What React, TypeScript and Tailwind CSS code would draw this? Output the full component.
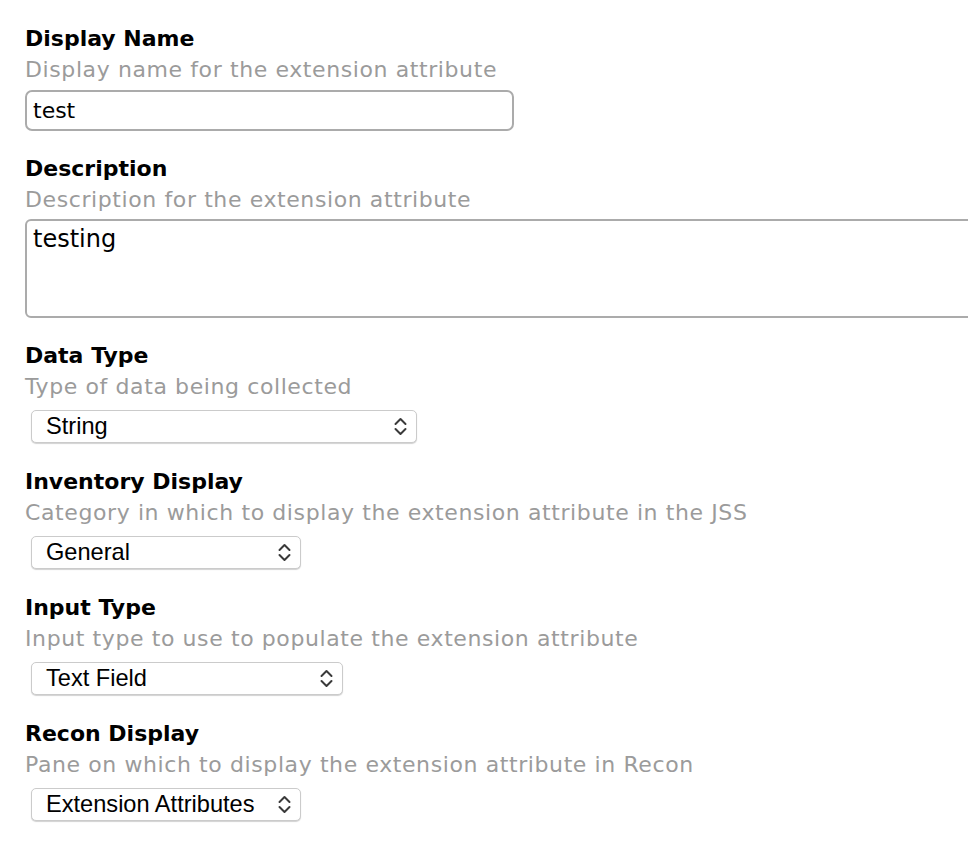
const labelCls = "font-['DejaVu_Sans',Verdana,sans-serif] text-[22px] font-bold leading-[31px] text-black";
const helpCls = "font-['DejaVu_Sans',Verdana,sans-serif] text-[22px] leading-[31px] tracking-[0.6px] text-[#9b9b9b]";

function Chevrons() {
  return (
    <svg width="13" height="19" viewBox="0 0 13 19" fill="none" className="shrink-0">
      <path d="M1.5 7L6.5 2L11.5 7" stroke="#3a3a3a" strokeWidth="2" strokeLinecap="round" strokeLinejoin="round" />
      <path d="M1.5 12L6.5 17L11.5 12" stroke="#3a3a3a" strokeWidth="2" strokeLinecap="round" strokeLinejoin="round" />
    </svg>
  );
}

function Select({ value, width }: { value: string; width: string }) {
  return (
    <div
      className={`mt-2 ml-1.5 flex h-[33px] items-center justify-between rounded-[5px] border border-[#cbcbcb] bg-white pl-[14px] pr-[9px] shadow-[0_1px_1px_rgba(0,0,0,0.18)] ${width}`}
    >
      <span className="font-['Liberation_Sans',Arial,sans-serif] text-[23.6px] leading-none text-black">{value}</span>
      <Chevrons />
    </div>
  );
}

function Field({ label, help, children, pad = 'pt-[23px]' }: { label: string; help: string; children: React.ReactNode; pad?: string }) {
  return (
    <section className={pad}>
      <h2 className={labelCls}>{label}</h2>
      <p className={helpCls}>{help}</p>
      {children}
    </section>
  );
}

export default function App() {
  return (
    <div className="min-h-[856px] w-[968px] overflow-hidden bg-white pl-[25px]">
      <Field label="Display Name" help="Display name for the extension attribute">
        <div className="mt-[5px] flex h-[41px] w-[489px] items-center rounded-[7px] border-2 border-[#ababab] px-[6px]">
          <span className="font-['DejaVu_Sans',Verdana,sans-serif] text-[22px] leading-none text-black">test</span>
        </div>
      </Field>

      <Field pad="pt-[22px]" label="Description" help="Description for the extension attribute">
        <div className="mt-[4px] h-[99px] w-[980px] rounded-[6px] border-2 border-[#ababab] px-[6px] pt-[3px]">
          <span className="font-['DejaVu_Sans',Verdana,sans-serif] text-[24px] leading-[30px] text-black">testing</span>
        </div>
      </Field>

      <Field pad="pt-[22px]" label="Data Type" help="Type of data being collected">
        <Select value="String" width="w-[386px]" />
      </Field>

      <Field label="Inventory Display" help="Category in which to display the extension attribute in the JSS">
        <Select value="General" width="w-[270px]" />
      </Field>

      <Field label="Input Type" help="Input type to use to populate the extension attribute">
        <Select value="Text Field" width="w-[312px]" />
      </Field>

      <Field label="Recon Display" help="Pane on which to display the extension attribute in Recon">
        <Select value="Extension Attributes" width="w-[270px]" />
      </Field>
    </div>
  );
}
